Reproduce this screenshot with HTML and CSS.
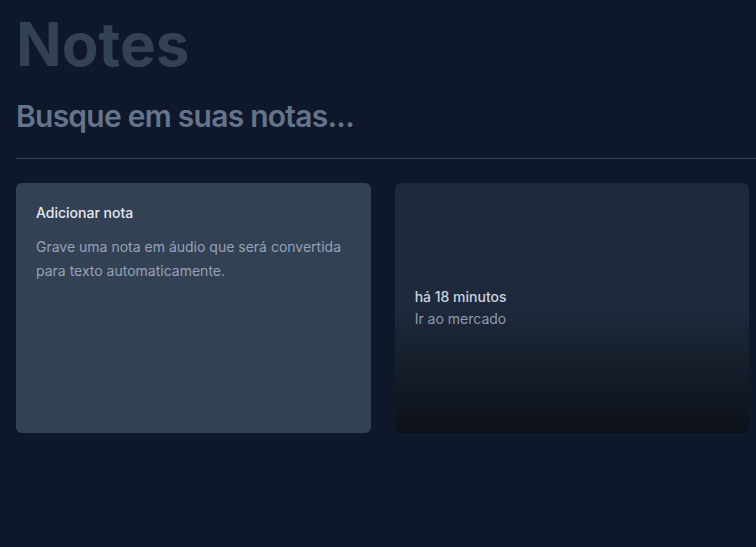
FILE: index.html
```html
<!DOCTYPE html>
<html lang="pt-BR">
<head>
<meta charset="utf-8">
<title>Notes</title>
<link rel="stylesheet" href="styles.css">
</head>
<body>
<div class="page">
  <h1 class="logo">Notes</h1>
  <form class="search">
    <input type="text" class="search-input" placeholder="Busque em suas notas...">
  </form>
  <div class="divider"></div>
  <div class="grid">
    <div class="card card-new">
      <span class="card-title">Adicionar nota</span>
      <p class="card-text">Grave uma nota em áudio que será convertida para texto automaticamente.</p>
    </div>
    <div class="card card-note">
      <span class="note-date">há 18 minutos</span>
      <p class="note-text">Ir ao mercado</p>
      <div class="note-fade"></div>
    </div>
  </div>
</div>
</body>
</html>
```

FILE: styles.css
```css
html, body {
  margin: 0;
  padding: 0;
  background: #0f172a;
  overflow: hidden;
  height: 100%;
}

body {
  font-family: Inter, "Noto Sans", sans-serif;
  -webkit-font-smoothing: antialiased;
}

.page {
  width: 1112px;
  padding: 14px 0 0 16px;
  display: flex;
  flex-direction: column;
  gap: 24px;
}

.logo {
  margin: 0;
  font-size: 60px;
  line-height: 60px;
  font-weight: 700;
  color: #334155;
}

.search {
  margin: 0;
}

.search-input {
  display: block;
  width: 100%;
  box-sizing: border-box;
  background: transparent;
  border: 0;
  outline: none;
  padding: 0;
  font-family: Inter, "Noto Sans", sans-serif;
  font-size: 30px;
  line-height: 36px;
  height: 36px;
  font-weight: 600;
  letter-spacing: -0.025em;
  color: #e2e8f0;
}

.search-input::placeholder {
  color: #64748b;
}

.divider {
  height: 1px;
  background: #334155;
}

.grid {
  display: grid;
  grid-template-columns: repeat(3, 1fr);
  grid-auto-rows: 250px;
  gap: 24px;
}

.card {
  border-radius: 6px;
  padding: 20px;
  box-sizing: border-box;
  font-size: 14px;
}

.card-new {
  background: #334155;
  display: flex;
  flex-direction: column;
  gap: 12px;
}

.card-title {
  font-weight: 500;
  line-height: 20px;
  color: #e2e8f0;
}

.card-text {
  margin: 0;
  line-height: 24px;
  color: #94a3b8;
}

.card-note {
  background: #1e293b;
  position: relative;
  overflow: hidden;
  display: flex;
  flex-direction: column;
  justify-content: center;
  padding-top: 22px;
}

.note-date {
  font-weight: 500;
  line-height: 20px;
  color: #cbd5e1;
}

.note-text {
  margin: 0;
  line-height: 24px;
  color: #94a3b8;
}

.note-fade {
  position: absolute;
  left: 0;
  right: 0;
  bottom: 0;
  height: 50%;
  background: linear-gradient(to top, rgba(0, 0, 0, 0.6), rgba(0, 0, 0, 0));
  pointer-events: none;
}
```
